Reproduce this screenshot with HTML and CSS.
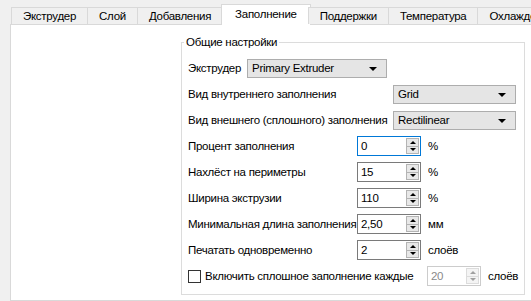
FILE: index.html
```html
<!DOCTYPE html>
<html lang="ru">
<head>
  <meta charset="UTF-8">
  <title>Заполнение</title>
  <link rel="stylesheet" href="styles.css">
</head>
<body>
  <div class="tabs">
    <div class="tab">Экструдер</div>
    <div class="tab">Слой</div>
    <div class="tab">Добавления</div>
    <div class="tab tab-active">Заполнение</div>
    <div class="tab">Поддержки</div>
    <div class="tab">Температура</div>
    <div class="tab">Охлаждение</div>
  </div>

  <div class="pane">
    <fieldset class="group">
      <legend class="group-title">Общие настройки</legend>

      <div class="row">
        <label class="row-label">Экструдер</label>
        <div class="combo combo-extruder">Primary Extruder<span class="combo-arrow"></span></div>
      </div>

      <div class="row">
        <label class="row-label label-wide">Вид внутреннего заполнения</label>
        <div class="combo combo-pattern">Grid<span class="combo-arrow"></span></div>
      </div>

      <div class="row">
        <label class="row-label label-wide">Вид внешнего (сплошного) заполнения</label>
        <div class="combo combo-pattern">Rectilinear<span class="combo-arrow"></span></div>
      </div>

      <div class="row">
        <label class="row-label label-num">Процент заполнения</label>
        <div class="spin spin-focus">
          <span class="spin-value">0</span>
          <span class="spin-btns"><span class="spin-up"></span><span class="spin-down"></span></span>
        </div>
        <span class="unit">%</span>
      </div>

      <div class="row">
        <label class="row-label label-num">Нахлёст на периметры</label>
        <div class="spin">
          <span class="spin-value">15</span>
          <span class="spin-btns"><span class="spin-up"></span><span class="spin-down"></span></span>
        </div>
        <span class="unit">%</span>
      </div>

      <div class="row">
        <label class="row-label label-num">Ширина экструзии</label>
        <div class="spin">
          <span class="spin-value">110</span>
          <span class="spin-btns"><span class="spin-up"></span><span class="spin-down"></span></span>
        </div>
        <span class="unit">%</span>
      </div>

      <div class="row">
        <label class="row-label label-num">Минимальная длина заполнения</label>
        <div class="spin">
          <span class="spin-value">2,50</span>
          <span class="spin-btns"><span class="spin-up"></span><span class="spin-down"></span></span>
        </div>
        <span class="unit">мм</span>
      </div>

      <div class="row">
        <label class="row-label label-num">Печатать одновременно</label>
        <div class="spin">
          <span class="spin-value">2</span>
          <span class="spin-btns"><span class="spin-up"></span><span class="spin-down"></span></span>
        </div>
        <span class="unit">слоёв</span>
      </div>

      <div class="row">
        <span class="checkbox"></span>
        <label class="check-label">Включить сплошное заполнение каждые</label>
        <div class="spin spin-disabled">
          <span class="spin-value">20</span>
          <span class="spin-btns"><span class="spin-up"></span><span class="spin-down"></span></span>
        </div>
        <span class="unit">слоёв</span>
      </div>
    </fieldset>
  </div>
</body>
</html>
```

FILE: styles.css
```css
body {
  margin: 0;
  padding: 0;
  background-color: #f0f0f0;
  font-family: "Liberation Sans", "DejaVu Sans", sans-serif;
  font-size: 11.5px;
  letter-spacing: -0.28px;
  color: #000;
  overflow: hidden;
}

.tabs {
  display: flex;
  align-items: flex-end;
  padding: 4px 0 0 12px;
  white-space: nowrap;
}

.tab {
  box-sizing: border-box;
  height: 17px;
  line-height: 16px;
  padding: 0 11px;
  margin-left: -1px;
  border: 1px solid #d9d9d9;
  border-bottom: none;
  background-color: #f0f0f0;
  flex-shrink: 0;
}

.tab-active {
  height: 21px;
  line-height: 19px;
  margin: 0 -2px -1px -2px;
  padding: 0 13px;
  background-color: #fff;
}

.pane {
  box-sizing: border-box;
  height: 277px;
  margin-left: 10px;
  border: 1px solid #d9d9d9;
  border-right: none;
  background-color: #fff;
  padding-top: 10px;
}

.group {
  box-sizing: border-box;
  width: 343px;
  height: 260px;
  margin: 0 0 0 170px;
  padding: 9px 6px 0 6px;
  border: 1px solid #dcdcdc;
  display: flex;
  flex-direction: column;
  gap: 6px;
}

.group-title {
  line-height: 14px;
  padding: 0 2px;
  margin-left: -4px;
}

.row {
  display: flex;
  align-items: center;
  height: 20px;
  white-space: nowrap;
}

.row-label {
  margin-right: 6px;
}

.label-wide {
  width: 205px;
  margin-right: 0;
}

.label-num {
  width: 169px;
  margin-right: 0;
}

.combo {
  position: relative;
  box-sizing: border-box;
  height: 19px;
  line-height: 17px;
  padding-left: 4px;
  border: 1px solid #adadad;
  background-color: #e5e5e5;
}

.combo-extruder {
  width: 140px;
}

.combo-pattern {
  width: 123px;
}

.combo-arrow {
  position: absolute;
  right: 9px;
  top: 7px;
  border-left: 4px solid transparent;
  border-right: 4px solid transparent;
  border-top: 4px solid #000;
}

.spin {
  box-sizing: border-box;
  display: flex;
  justify-content: space-between;
  width: 64px;
  height: 20px;
  border: 1px solid #7a7a7a;
  background-color: #fff;
}

.spin-focus {
  border-color: #0078d7;
}

.spin-value {
  line-height: 18px;
  padding-left: 3px;
}

.spin-btns {
  display: flex;
  flex-direction: column;
  width: 13px;
  margin: 1px 1px 1px 0;
  border: 1px solid #b4b4b4;
  background-color: #e8e8e8;
  box-sizing: border-box;
}

.spin-up, .spin-down {
  flex: 1;
  display: flex;
  align-items: center;
  justify-content: center;
}

.spin-up {
  border-bottom: 1px solid #b4b4b4;
}

.spin-up::after {
  content: "";
  border-left: 3px solid transparent;
  border-right: 3px solid transparent;
  border-bottom: 3px solid #000;
}

.spin-down::after {
  content: "";
  border-left: 3px solid transparent;
  border-right: 3px solid transparent;
  border-top: 3px solid #000;
}

.spin-disabled {
  width: 54px;
  border-color: #cccccc;
  color: #8a8a8a;
}

.spin-disabled .spin-btns {
  border-color: #dcdcdc;
  background-color: #f4f4f4;
}

.spin-disabled .spin-up {
  border-bottom-color: #dcdcdc;
}

.spin-disabled .spin-up::after {
  border-bottom-color: #a0a0a0;
}

.spin-disabled .spin-down::after {
  border-top-color: #a0a0a0;
}

.unit {
  margin-left: 7px;
}

.checkbox {
  box-sizing: border-box;
  width: 13px;
  height: 13px;
  border: 1px solid #333;
  background-color: #fff;
  margin-right: 4px;
}

.check-label {
  width: 222px;
}
```
